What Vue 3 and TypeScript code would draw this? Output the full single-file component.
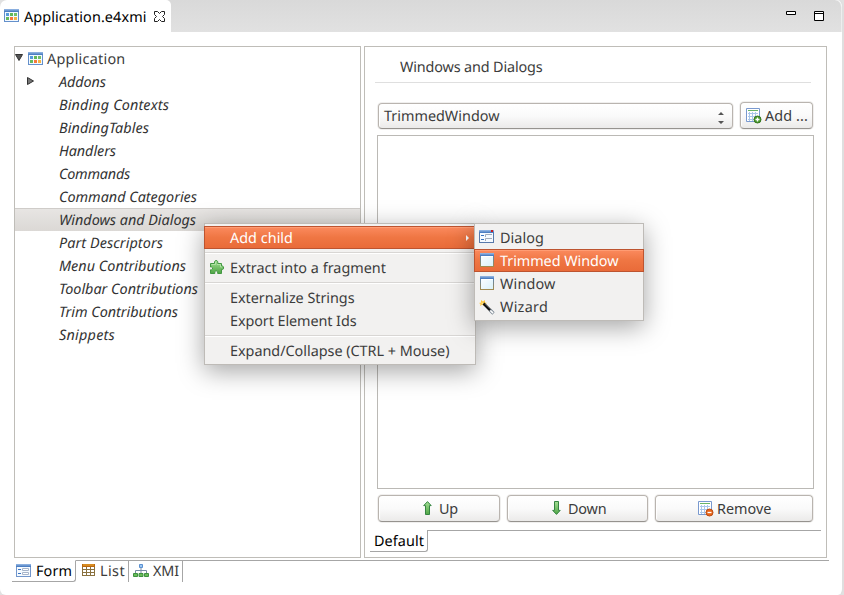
<script setup lang="ts">
import type { Directive } from 'vue'

interface TreeEntry { label: string; width: number; expandable?: boolean; selected?: boolean }
interface MenuEntry { label: string; width: number; icon?: string; active?: boolean; submenu?: boolean; separated?: boolean }

/* Spaces the letters so that a label takes the given advance in pixels. */
const vFit: Directive<HTMLElement, number> = {
  mounted(el, { value }) {
    const natural = el.getBoundingClientRect().width
    const count = (el.textContent ?? '').length
    if (count > 0) el.style.letterSpacing = `${(value - natural) / count}px`
  },
}

const tree: TreeEntry[] = [
  { label: 'Addons', width: 47, expandable: true },
  { label: 'Binding Contexts', width: 110 },
  { label: 'BindingTables', width: 90 },
  { label: 'Handlers', width: 57 },
  { label: 'Commands', width: 71 },
  { label: 'Command Categories', width: 138 },
  { label: 'Windows and Dialogs', width: 137, selected: true },
  { label: 'Part Descriptors', width: 104 },
  { label: 'Menu Contributions', width: 127 },
  { label: 'Toolbar Contributions', width: 139 },
  { label: 'Trim Contributions', width: 119 },
  { label: 'Snippets', width: 56 },
]

const menu: MenuEntry[] = [
  { label: 'Add child', width: 63, active: true, submenu: true },
  { label: 'Extract into a fragment', width: 156, icon: 'puzzle', separated: true },
  { label: 'Externalize Strings', width: 124.5, separated: true },
  { label: 'Export Element Ids', width: 126.5 },
  { label: 'Expand/Collapse (CTRL + Mouse)', width: 219.5, separated: true },
]

const submenu: MenuEntry[] = [
  { label: 'Dialog', width: 44, icon: 'dialog' },
  { label: 'Trimmed Window', width: 118.5, icon: 'window', active: true },
  { label: 'Window', width: 55.5, icon: 'window' },
  { label: 'Wizard', width: 48, icon: 'wizard' },
]
</script>

<template>
  <svg class="defs" width="0" height="0" aria-hidden="true">
    <defs>
      <linearGradient id="blueBar" x1="0" y1="0" x2="0" y2="1"><stop offset="0" stop-color="#9abbe6" /><stop offset="1" stop-color="#3d73bb" /></linearGradient>
      <linearGradient id="pane" x1="0" y1="0" x2="1" y2="1"><stop offset="0" stop-color="#fff" /><stop offset="1" stop-color="#d8f1fa" /></linearGradient>
      <linearGradient id="frame" x1="0" y1="0" x2="0" y2="1"><stop offset="0" stop-color="#4d83c4" /><stop offset="1" stop-color="#a28b50" /></linearGradient>
      <linearGradient id="greenFill" x1="0" y1="0" x2="0" y2="1"><stop offset="0" stop-color="#a4df95" /><stop offset="1" stop-color="#4fa544" /></linearGradient>
    </defs>
    <symbol id="application" viewBox="0 0 15 13">
      <rect x=".5" y=".5" width="14" height="12" fill="#f3f9ff" stroke="#6490cb" />
      <rect x="0" y="0" width="15" height="3" fill="url(#blueBar)" />
      <rect x="2" y="4" width="3" height="3" fill="#559bdb" /><rect x="6" y="4" width="3" height="3" fill="#62b85a" /><rect x="10" y="4" width="3" height="3" fill="#72bf69" />
      <rect x="2" y="8" width="3" height="3" fill="#65b85c" /><rect x="6" y="8" width="3" height="3" fill="#f5793b" /><rect x="10" y="8" width="3" height="3" fill="#f6b343" />
    </symbol>
    <symbol id="form" viewBox="0 0 15 13">
      <rect x=".5" y=".5" width="14" height="12" fill="#f5faff" stroke="#7296cc" />
      <rect x="0" y="0" width="15" height="3" fill="url(#blueBar)" />
      <path d="M2 5.5h3M2 9.5h3" stroke="#3b75c1" /><path d="M6.5 4.5h6v2h-6zM6.5 8.5h6v2h-6z" fill="#fff" stroke="#a6b4ca" />
    </symbol>
    <symbol id="dialog" viewBox="0 0 15 13">
      <rect x=".5" y=".5" width="14" height="12" fill="#f5faff" stroke="#5879aa" />
      <rect x="0" y="0" width="15" height="3" fill="url(#blueBar)" /><rect x="12" y="0" width="2" height="2" fill="#cb2020" />
      <path d="M2 5.5h3M2 9.5h3" stroke="#3b75c1" /><path d="M6.5 7V4.5H13M6.5 11V8.5H13" fill="none" stroke="#a1abba" />
    </symbol>
    <symbol id="window" viewBox="0 0 15 14">
      <rect x="1.5" y=".5" width="13" height="13" fill="url(#pane)" stroke="url(#frame)" />
      <rect x="1" y="0" width="14" height="3" fill="url(#blueBar)" /><path d="M2 3.5h12" stroke="#fff" />
    </symbol>
    <symbol id="wizard" viewBox="0 0 16 16">
      <path d="M2 1l2 1.500L6 1v2.500l2 .500-2 1-1 2-1.500-1.500L1 7l.500-2L0 4l2-.500z" fill="#ffc740" /><path d="M2.500 4l2 .500" stroke="#fff2a8" />
      <path d="M4.500 4.500l7 7" stroke="#111" stroke-width="2.600" /><path d="M11 11l3.500 3.500" stroke="#7e8994" stroke-width="3.200" /><path d="M11.300 11.500l2.800 2.700" stroke="#fff" stroke-width="1.600" /><path d="M6 4.800l5 5" stroke="#888" stroke-width=".6" />
    </symbol>
    <symbol id="puzzle" viewBox="0 0 14 14">
      <path d="M.5 3.500h4V1.800L5.500.5h1.300l1 1.300v1.700h3.700V6h1l1 .8v2l-1 .7h-1v4H7.700v-1.700l-1-.8h-1l-.9.8v1.700H.5V9.800h1.200l.8-.8V7.800L1.700 7H.5z" fill="url(#greenFill)" stroke="#439843" stroke-linejoin="round" />
      <path d="M1.500 4.500h4V2M7 4.500h3.500V7H12" fill="none" stroke="#b9e8ad" stroke-width=".8" />
    </symbol>
    <symbol id="table" viewBox="0 0 16 16">
      <path d="M.5.5h13v13H.5z" fill="#fff" stroke="#7999cf" /><path d="M2 2.500h10" stroke="#69b567" />
      <path d="M2 5.500h10M2 8.500h10M2 11.500h10M3.500 4v9M6.500 4v9M9.500 4v9" stroke="#a9c7eb" />
    </symbol>
    <symbol id="grid" viewBox="0 0 13 12">
      <rect width="13" height="12" fill="#8a713e" /><rect width="13" height="3" fill="#b96710" /><path d="M1 1h11" stroke="#f7b233" />
      <path d="M1 3h3v2H1zM5 3h3v2H5zM9 3h3v2H9zM1 6h3v2H1zM5 6h3v2H5zM9 6h3v2H9zM1 9h3v2H1zM5 9h3v2H5zM9 9h3v2H9z" fill="#fff" />
    </symbol>
    <symbol id="hierarchy" viewBox="0 0 16 13">
      <path d="M8 4v5M2.500 9V6.500h11V9" fill="none" stroke="#788ba4" />
      <path d="M6.500.500h3v3h-3z" fill="#9cc8f4" stroke="#5b90d1" />
      <path d="M.500 9.500h4v3h-4zM6 9.500h4v3H6zM11.500 9.500h4v3h-4z" fill="#6abc58" stroke="#3e9140" />
    </symbol>
  </svg>

  <div class="editor">
    <header class="tabbar">
      <div class="filetab">
        <svg class="i15"><use href="#application" /></svg>
        <span class="caption" v-fit="122.5">Application.e4xmi</span>
        <svg class="close" viewBox="0 0 11 11"><path d="M.500.500h3l2 2 2-2h3v3l-2 2 2 2v3h-3l-2-2-2 2h-3v-3l2-2-2-2z" fill="#fff" stroke="#222" /></svg>
      </div>
      <div class="controls">
        <svg class="min" viewBox="0 0 10 4"><path d="M.500.500h9v3h-9z" fill="#fff" stroke="#000" /></svg>
        <svg class="max" viewBox="0 0 10 10"><path d="M.500.500h9v9h-9zM0 2.500h10" fill="#fff" stroke="#000" /></svg>
      </div>
    </header>

    <main class="body">
      <section class="tree">
        <div class="row root">
          <svg class="open" viewBox="0 0 8 7"><path d="M.500.500h7L4 6.500z" fill="#555" stroke="#333" /></svg>
          <svg class="i15"><use href="#application" /></svg>
          <span v-fit="78.5">Application</span>
        </div>
        <div v-for="item in tree" :key="item.label" class="row leaf" :class="{ selected: item.selected }">
          <span class="twist"><svg v-if="item.expandable" viewBox="0 0 7 8"><path d="M.500.500v7L6.500 4z" fill="#777" stroke="#333" /></svg></span>
          <span v-fit="item.width">{{ item.label }}</span>
        </div>
      </section>

      <section class="detail">
        <h1><span v-fit="142.5">Windows and Dialogs</span></h1>
        <div class="choose">
          <div class="control combo">
            <span v-fit="115.5">TrimmedWindow</span>
            <svg viewBox="0 0 6 14"><path d="M3 1l3 3H0zM0 10h6l-3 3z" fill="#555" /></svg>
          </div>
          <button class="control add">
            <svg class="i16"><use href="#table" /><circle cx="11.500" cy="11.500" r="3.500" fill="#4a9b2e" stroke="#34751e" /><path d="M9.500 11.500h4M11.500 9.500v4" stroke="#fff" stroke-width="1.300" /></svg>
            <span v-fit="43">Add ...</span>
          </button>
        </div>
        <div class="listbox"></div>
        <div class="actions">
          <button class="control up">
            <svg class="arrow" viewBox="0 0 9 14"><path d="M4.500.600l3.700 4H6.500v8.900h-4V4.600H.700z" fill="url(#greenFill)" stroke="#358542" /></svg>
            <span v-fit="19">Up</span>
          </button>
          <button class="control down">
            <svg class="arrow" viewBox="0 0 9 14"><path d="M4.500 13.400l3.700-4H6.500V.500h-4v8.900H.700z" fill="url(#greenFill)" stroke="#358542" /></svg>
            <span v-fit="38.5">Down</span>
          </button>
          <button class="control remove">
            <svg class="i16"><use href="#table" /><circle cx="11.500" cy="11.500" r="3.500" fill="#e96619" stroke="#b94b13" /><path d="M9.500 11.500h4" stroke="#fff" stroke-width="1.300" /></svg>
            <span v-fit="54.5">Remove</span>
          </button>
        </div>
        <div class="folder"><div class="foldertab"><span v-fit="50">Default</span></div><div class="folderline"></div></div>
      </section>
    </main>

    <footer class="pages">
      <div class="page current"><svg class="i15"><use href="#form" /></svg><span v-fit="36">Form</span></div>
      <div class="page list"><svg class="i13"><use href="#grid" /></svg><span v-fit="25">List</span></div>
      <div class="page xmi"><svg class="i16b"><use href="#hierarchy" /></svg><span v-fit="26">XMI</span></div>
      <div class="rest"></div>
    </footer>

    <div class="menu context">
      <template v-for="item in menu" :key="item.label">
        <div v-if="item.separated" class="separator"></div>
        <div class="item" :class="{ active: item.active }">
          <span class="glyph"><svg v-if="item.icon" :class="item.icon"><use :href="'#' + item.icon" /></svg></span>
          <span v-fit="item.width">{{ item.label }}</span>
          <svg v-if="item.submenu" class="more" viewBox="0 0 3 6"><path d="M0 0l3 3-3 3z" fill="#fff" /></svg>
        </div>
      </template>
    </div>
    <div class="menu sub">
      <div v-for="item in submenu" :key="item.label" class="item" :class="{ active: item.active }">
        <span class="glyph"><svg :class="item.icon"><use :href="'#' + item.icon" /></svg></span>
        <span v-fit="item.width">{{ item.label }}</span>
      </div>
    </div>
  </div>
</template>

<style>
body { background: #e1e1e1; overflow: hidden; }
</style>

<style scoped>
* { box-sizing: border-box; }
svg { display: block; flex: none; }
.defs { position: absolute; }
.editor { position: relative; width: 844px; height: 595px; display: flex; flex-direction: column; background: #fff; border-right: 2px solid #dfdfdf; border-radius: 7px 7px 6px 6px; overflow: hidden; font: 14.4px/23px "Noto Sans", "Open Sans", sans-serif; color: #3c3c3c; white-space: nowrap; text-rendering: geometricPrecision; }
.tabbar { height: 32px; flex: none; display: flex; justify-content: space-between; background: linear-gradient(#d9d9d9, #e1e1e1); border-right: 1px solid #eee; border-radius: 0 7px 0 0; }
.filetab { width: 171px; display: flex; padding-left: 4px; background: #fff; border-radius: 6px 5px 0 0; color: #000; }
.filetab .i15 { margin-top: 9px; }
.caption { margin: 6px 0 0 5px; }
.close { width: 11px; height: 11px; margin: 11px 0 0 7px; }
.controls { display: flex; gap: 18px; padding: 11px 17px 0 0; }
.min { width: 10px; height: 4px; }
.max { width: 10px; height: 10px; }
.i15 { width: 15px; height: 13px; }
.i16 { width: 16px; height: 16px; }
.i13 { width: 13px; height: 12px; }
.i16b { width: 16px; height: 13px; }
.body { height: 512px; margin: 14px 15px 0 14px; flex: none; display: flex; gap: 3px; }
.tree { width: 347px; flex: none; border: 1px solid #bfbdb8; }
.row { height: 23px; display: flex; line-height: 25px; }
.root .open { width: 8px; height: 7px; margin-top: 7px; }
.root .i15 { margin: 5px 4px 0 5px; }
.leaf { padding-left: 12px; font-style: italic; color: #333; }
.twist { width: 32px; padding-top: 7px; }
.twist svg { width: 7px; height: 8px; }
.selected { background: linear-gradient(#e7e5e3, #dbd8d5); border-top: 1px solid #cfccc9; line-height: 23px; }
.detail { width: 463px; border: 1px solid #bfbdb8; padding-left: 5px; }
h1 { width: 436px; height: 36px; margin: 0 0 19px 5px; padding: 9px 0 0 25px; border-bottom: 1px solid #dfdfdf; font: inherit; }
.choose { display: flex; gap: 7px; margin-left: 8px; }
.control { display: flex; border: 1px solid #b9b4af; border-bottom-color: #96938f; border-radius: 4px; background: linear-gradient(#fff 0%, #fafafa 50%, #ebeae9 100%); box-shadow: 0 0 0 1px #f0efee, inset 1px 1px 1px #fff; color: #3c3c3c; font: inherit; padding: 0; }
.combo { width: 355px; height: 26px; margin-top: 1px; justify-content: space-between; padding: 1px 8px 0 5px; line-height: 24px; }
.combo svg { width: 6px; height: 14px; margin-top: 6px; }
.add { width: 73px; height: 27px; padding: 5px 0 0 5px; }
.add .i16 { margin: 0 3px 0 0; }
.add span, .actions span { margin-top: -4px; }
.listbox { width: 437px; height: 354px; margin: 6px 0 6px 7px; border: 1px solid #bbb9b5; background: #fff; }
.actions { display: flex; gap: 7px; margin-left: 8px; }
.actions .control { height: 27px; padding-top: 5px; }
.up { width: 122px; }
.down { width: 141px; }
.remove { width: 158px; }
.actions .up { padding-left: 43px; }
.actions .down { padding-left: 43px; }
.actions .remove { padding-left: 42px; }
.arrow { width: 9px; height: 14px; margin: 0 7px 0 1px; }
.remove .i16 { margin: 0 3px 0 0; }
.folder { display: flex; margin-top: 8px; }
.foldertab { width: 58px; height: 22px; padding-left: 4px; border-right: 1px solid #a6a6a6; border-bottom: 1px solid #a6a6a6; border-radius: 0 0 3px 0; color: #000; line-height: 23px; }
.folderline { width: 393px; border-top: 1px solid #a6a6a6; }
.pages { height: 22px; margin: 2px 13px 0 12px; display: flex; line-height: 21px; }
.page { display: flex; border-top: 1px solid #a6a6a6; border-right: 1px solid #a6a6a6; }
.current { width: 64px; padding-left: 4px; border-top-color: transparent; border-bottom: 1px solid #a6a6a6; border-radius: 0 0 3px 0; color: #000; }
.current .i15 { margin: 3px 5px 0 0; }
.list { width: 53px; padding-left: 6px; }
.list .i13 { margin: 3px 5px 0 0; }
.xmi { width: 54px; padding-left: 4px; }
.xmi .i16b { margin: 3px 4px 0 0; }
.rest { flex: 1; border-top: 1px solid #a6a6a6; }
.menu { position: absolute; top: 223px; padding: 2px 0; border: 1px solid #bebbb7; background: #f2f1f0; box-shadow: 0 6px 24px rgba(0, 0, 0, .36); }
.context { left: 204px; width: 272px; }
.sub { left: 474px; width: 170px; }
.item { height: 23px; display: flex; margin: 0 -1px; border: 1px solid transparent; line-height: 24px; }
.active { color: #fff; border-color: #bd5430; background: linear-gradient(#fb8a5e, #ef7643 50%, #e96b39); box-shadow: inset 0 1px #ff9c73; }
.glyph { width: 25px; padding: 3px 0 0 4px; flex: none; }
.glyph .puzzle { width: 14px; height: 14px; margin-left: 1px; }
.glyph .dialog { width: 15px; height: 13px; }
.glyph .window { width: 15px; height: 14px; }
.glyph .wizard { width: 16px; height: 16px; }
.more { width: 3px; height: 6px; margin: 8px 6px 0 auto; }
.separator { height: 7px; padding-top: 3px; }
.separator::before { content: ''; display: block; height: 2px; background: #d8d6d4; border-bottom: 1px solid #fff; box-sizing: border-box; }
</style>
